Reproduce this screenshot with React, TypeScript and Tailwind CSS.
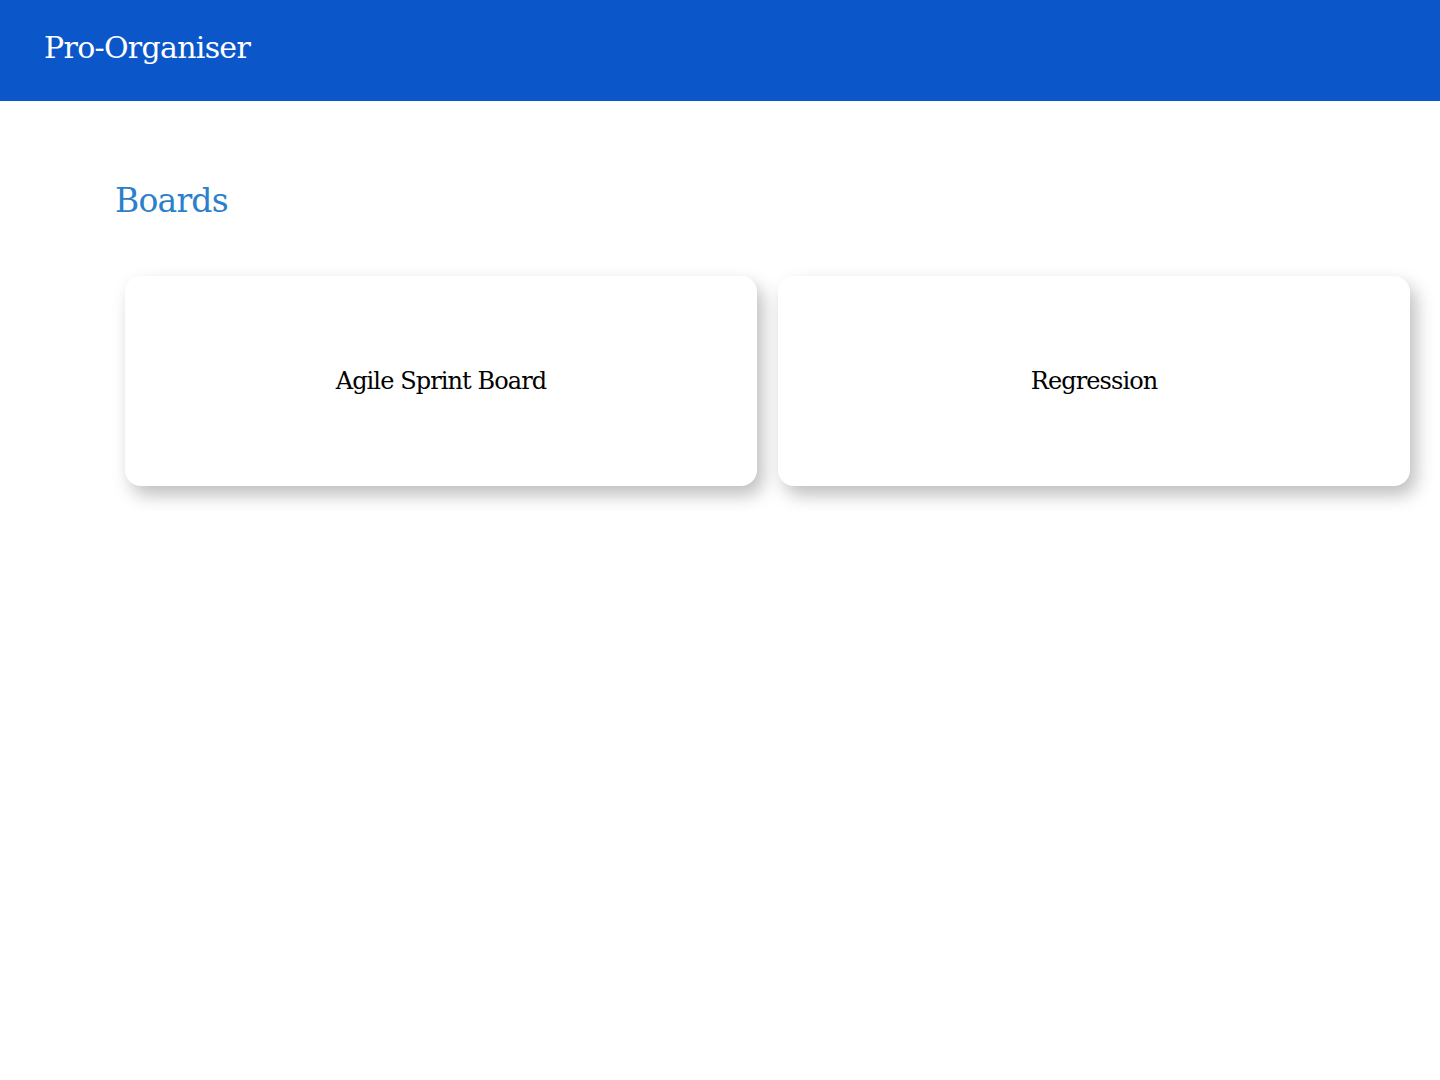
import React from 'react';

const boards = [
  { id: 1, name: 'Agile Sprint Board' },
  { id: 2, name: 'Regression' },
];

const App: React.FC = () => {
  return (
    <div className="min-h-screen bg-white" style={{ fontFamily: '"DejaVu Serif", "Liberation Serif", serif' }}>
      <header className="h-[101px] bg-[#0b57c9] flex items-center px-[44px]">
        <h1 className="text-[30px] text-white leading-none tracking-[-0.7px] -mt-[5px]">Pro-Organiser</h1>
      </header>

      <main className="px-[115px] pt-[83px]">
        <h2 className="text-[33px] text-[#2a80cc] leading-none tracking-[-0.8px]">Boards</h2>

        <div className="mt-[59px] ml-[10px] grid grid-cols-2 gap-[21px] w-[1285px]">
          {boards.map((board) => (
            <div
              key={board.id}
              className="h-[210px] bg-white rounded-[16px] flex items-center justify-center shadow-[6px_9px_18px_rgba(0,0,0,0.26)]"
            >
              <span className="text-[24px] text-black tracking-[-0.9px]">{board.name}</span>
            </div>
          ))}
        </div>
      </main>
    </div>
  );
};

export default App;
